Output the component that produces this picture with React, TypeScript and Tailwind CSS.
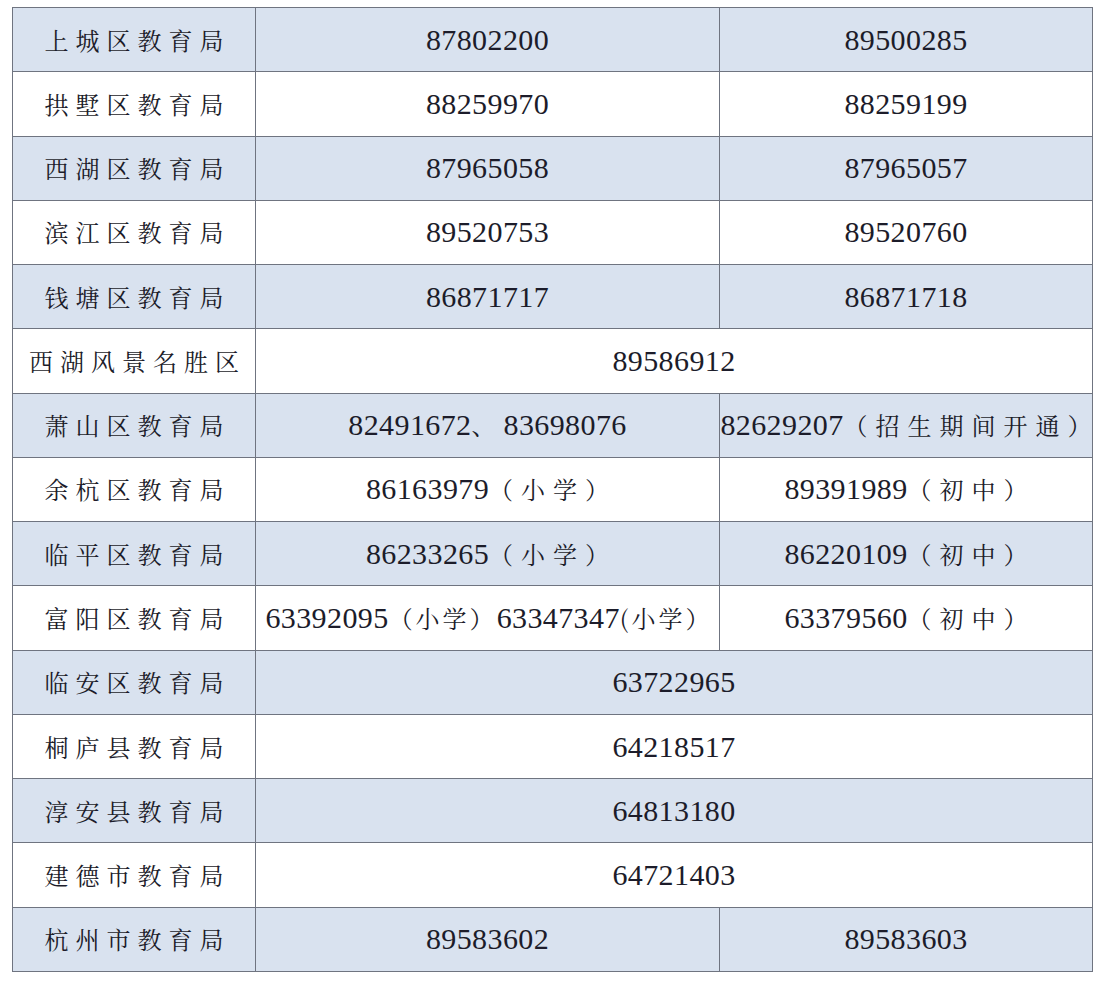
/**
 * 杭州市各区教育局咨询电话表
 */

type Row = {
  name: string;
  a: string;
  b?: string;
  tight?: boolean;
};

const ROWS: Row[] = [
  { name: "上城区教育局", a: "87802200", b: "89500285" },
  { name: "拱墅区教育局", a: "88259970", b: "88259199" },
  { name: "西湖区教育局", a: "87965058", b: "87965057" },
  { name: "滨江区教育局", a: "89520753", b: "89520760" },
  { name: "钱塘区教育局", a: "86871717", b: "86871718" },
  { name: "西湖风景名胜区", a: "89586912" },
  { name: "萧山区教育局", a: "82491672、83698076", b: "82629207（招生期间开通）" },
  { name: "余杭区教育局", a: "86163979（小学）", b: "89391989（初中）" },
  { name: "临平区教育局", a: "86233265（小学）", b: "86220109（初中）" },
  {
    name: "富阳区教育局",
    a: "63392095（小学）63347347\u0028小学）",
    b: "63379560（初中）",
    tight: true,
  },
  { name: "临安区教育局", a: "63722965" },
  { name: "桐庐县教育局", a: "64218517" },
  { name: "淳安县教育局", a: "64813180" },
  { name: "建德市教育局", a: "64721403" },
  { name: "杭州市教育局", a: "89583602", b: "89583603" },
];

/**
 * Mixed text: digits large with tight spacing, Chinese smaller and spaced out.
 */
function Mixed({ text, tight }: { text: string; tight?: boolean }) {
  const parts = text.split(/(\d+)/).filter(Boolean);
  return (
    <span className="whitespace-nowrap">
      {parts.map((p, i) => {
        const last = i === parts.length - 1;
        if (/^\d+$/.test(p)) {
          return (
            <span key={i} className="font-[Liberation_Serif] text-[30px] tracking-[0.4px]">
              {p}
            </span>
          );
        }
        if (tight) {
          return (
            <span
              key={i}
              className={
                last
                  ? "font-[Noto_Serif_CJK_SC] mr-[-3px] text-[24px] tracking-[3px]"
                  : "font-[Noto_Serif_CJK_SC] text-[24px] tracking-[3px]"
              }
            >
              {p}
            </span>
          );
        }
        return (
          <span
            key={i}
            className={
              last
                ? "font-[Noto_Serif_CJK_SC] mr-[-8px] text-[24px] tracking-[8px]"
                : "font-[Noto_Serif_CJK_SC] text-[24px] tracking-[8px]"
            }
          >
            {p}
          </span>
        );
      })}
    </span>
  );
}

export default function App() {
  return (
    <div className="min-h-screen bg-white pl-[12px] pt-[7px] font-[Liberation_Serif]">
      <div className="grid w-[1081px] auto-rows-[64.27px] grid-cols-[243px_464px_373px] border-l border-t border-[#6f7480] text-[#1c1c2a]">
        {ROWS.map((row, i) => {
          const bg = i % 2 === 0 ? "bg-[#d9e2ef]" : "bg-white";
          return (
            <div key={row.name} className="contents">
              <div
                className={`${bg} flex items-center justify-center border-b border-r border-[#6f7480]`}
              >
                <span className="font-[Noto_Serif_CJK_SC] mr-[-7px] whitespace-nowrap text-[24px] tracking-[7px]">
                  {row.name}
                </span>
              </div>
              {row.b ? (
                <>
                  <div
                    className={`${bg} flex items-center justify-center border-b border-r border-[#6f7480] leading-none`}
                  >
                    <Mixed text={row.a} tight={row.tight} />
                  </div>
                  <div
                    className={`${bg} flex items-center justify-center border-b border-r border-[#6f7480] leading-none`}
                  >
                    <Mixed text={row.b} />
                  </div>
                </>
              ) : (
                <div
                  className={`${bg} col-span-2 flex items-center justify-center border-b border-r border-[#6f7480] leading-none`}
                >
                  <Mixed text={row.a} />
                </div>
              )}
            </div>
          );
        })}
      </div>
    </div>
  );
}
